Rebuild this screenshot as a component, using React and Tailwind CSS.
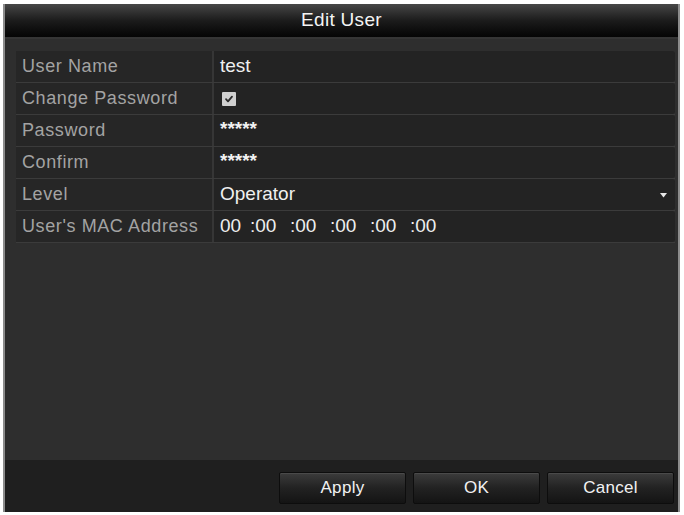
const rows = [
  { label: 'User Name', kind: 'text', value: 'test' },
  { label: 'Change Password', kind: 'check' },
  { label: 'Password', kind: 'secret', value: '*****' },
  { label: 'Confirm', kind: 'secret', value: '*****' },
  { label: 'Level', kind: 'select', value: 'Operator' },
  { label: "User's MAC Address", kind: 'mac' },
];

const font = { fontFamily: '"Liberation Sans", Arial, sans-serif' };

function Value({ row }) {
  if (row.kind === 'check') {
    return (
      <span className="ml-[8px] w-[14px] h-[14px] bg-[#cfcfcf] rounded-[1px] flex items-center justify-center">
        <svg width="10" height="10" viewBox="0 0 10 10">
          <path d="M2 5.2l2 2.2L8 2.6" fill="none" stroke="#2a2a2a" strokeWidth="1.8" strokeLinecap="round" strokeLinejoin="round" />
        </svg>
      </span>
    );
  }
  if (row.kind === 'mac') {
    return (
      <div className="flex pl-[6px] text-[19px] text-[#eeeeee]">
        {['00', ':00', ':00', ':00', ':00', ':00'].map((p, i) => (
          <span key={i} className={i === 0 ? 'w-[30px]' : 'w-[40px]'}>{p}</span>
        ))}
      </div>
    );
  }
  if (row.kind === 'secret') {
    return <span className="pl-[6px] pb-[2px] text-[19px] font-bold text-[#f2f2f2]">{row.value}</span>;
  }
  return <span className="pl-[6px] text-[19px] text-[#f0f0f0]">{row.value}</span>;
}

export default function App() {
  return (
    <div className="min-h-screen bg-white pt-[4px] pl-[3px]" style={font}>
      <div className="w-[677px] h-[508px] flex flex-col border-x-2 border-[#8c8c8c] bg-[#2e2e2e]">
        {/* Header */}
        <div className="h-[33px] flex items-center justify-center bg-gradient-to-b from-[#474747] via-[#1c1c1c] to-[#050505]">
          <span className="text-[19px] text-[#f4f4f4] tracking-[0.3px]">Edit User</span>
        </div>

        {/* Body */}
        <div className="flex-1 pt-[12px] pl-[11px] pr-[3px] border-t-[2px] border-[#353535]">
          <div className="flex flex-col">
            {rows.map((row) => (
              <div key={row.label} className="flex h-[32px] border-b border-[#3b3b3b]">
                <div className="w-[196px] flex items-center pl-[6px] bg-[#262626] text-[18px] text-[#a3a3a3] tracking-[0.6px]">
                  {row.label}
                </div>
                <div className="w-[2px] bg-[#363636]" />
                <div className="flex-1 flex items-center bg-[#232323] rounded-r-[3px] relative">
                  <Value row={row} />
                  {row.kind === 'select' && (
                    <svg className="absolute right-[8px] top-[14px]" width="7" height="5" viewBox="0 0 7 5">
                      <path d="M0 0h7L3.5 4.5z" fill="#e8e8e8" />
                    </svg>
                  )}
                </div>
              </div>
            ))}
          </div>
        </div>

        {/* Footer */}
        <div className="h-[52px] bg-[#1f1f1f] flex justify-end items-start pt-[12px] pr-[4px] gap-[7px]">
          {['Apply', 'OK', 'Cancel'].map((b) => (
            <button
              key={b}
              className="w-[127px] h-[32px] rounded-[2px] border border-[#0d0d0d] bg-gradient-to-b from-[#3c3c3c] via-[#222222] to-[#141414] text-[17px] text-[#f2f2f2] tracking-[0.3px] shadow-[inset_0_1px_0_#4a4a4a]"
            >
              {b}
            </button>
          ))}
        </div>
      </div>
    </div>
  );
}
